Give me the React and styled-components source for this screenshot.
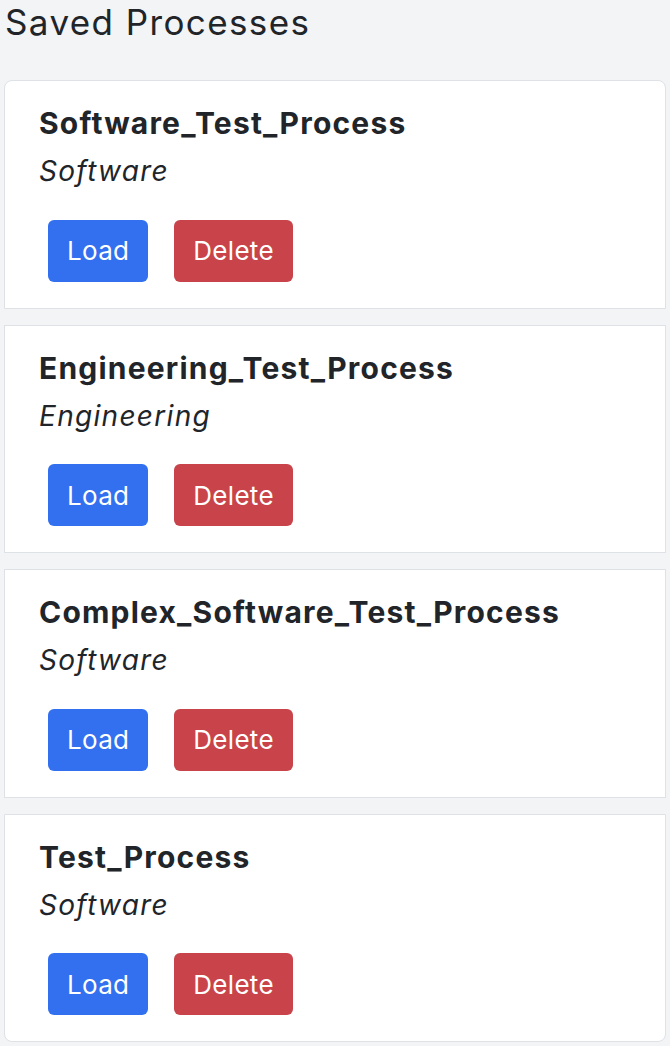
import React from 'react';
import styled, { createGlobalStyle } from 'styled-components';

const GlobalStyle = createGlobalStyle`
  html, body {
    margin: 0;
    padding: 0;
    background: #f3f4f6;
  }
  body {
    font-family: Inter, "Noto Sans", "Liberation Sans", sans-serif;
    color: #212529;
  }
`;

const Page = styled.div`
  padding: 1px 4px 0;
`;

const Heading = styled.h2`
  margin: 0 0 37px 1px;
  font-size: 35px;
  font-weight: 400;
  line-height: 1.2;
  letter-spacing: 1.4px;
`;

const ProcessList = styled.div`
  display: flex;
  flex-direction: column;
  gap: 16px;
`;

const ProcessItem = styled.div`
  display: flex;
  flex-direction: column;
  background: #fff;
  border: 1px solid #dee2e6;
  padding: 24px 34px 26px;
  &:first-child {
    border-top-left-radius: 8px;
    border-top-right-radius: 8px;
  }
  &:last-child {
    border-bottom-left-radius: 8px;
    border-bottom-right-radius: 8px;
  }
`;

const Title = styled.h5`
  margin: 0;
  font-size: 30px;
  font-weight: 700;
  line-height: 1.2;
  letter-spacing: 1.2px;
`;

const Category = styled.p`
  margin: 14px 0 0;
  font-size: 28px;
  font-style: italic;
  line-height: 1.2;
  letter-spacing: 1.3px;
`;

const Actions = styled.div`
  display: flex;
  gap: 26px;
  margin: 31px 0 0 9px;
`;

const Button = styled.button`
  height: 62px;
  padding: 0 19px;
  border: none;
  border-radius: 6px;
  font-family: inherit;
  font-size: 26px;
  letter-spacing: 0.3px;
  color: #fff;
  background: ${(p) => (p.$variant === 'danger' ? '#c8444a' : '#3370f0')};
  cursor: pointer;
`;

const processes = [
  { name: 'Software_Test_Process', category: 'Software' },
  { name: 'Engineering_Test_Process', category: 'Engineering' },
  { name: 'Complex_Software_Test_Process', category: 'Software' },
  { name: 'Test_Process', category: 'Software' },
];

export default function App() {
  return (
    <Page>
      <GlobalStyle />
      <Heading>Saved Processes</Heading>
      <ProcessList>
        {processes.map((proc) => (
          <ProcessItem key={proc.name}>
            <Title>{proc.name}</Title>
            <Category>{proc.category}</Category>
            <Actions>
              <Button>Load</Button>
              <Button $variant="danger">Delete</Button>
            </Actions>
          </ProcessItem>
        ))}
      </ProcessList>
    </Page>
  );
}
